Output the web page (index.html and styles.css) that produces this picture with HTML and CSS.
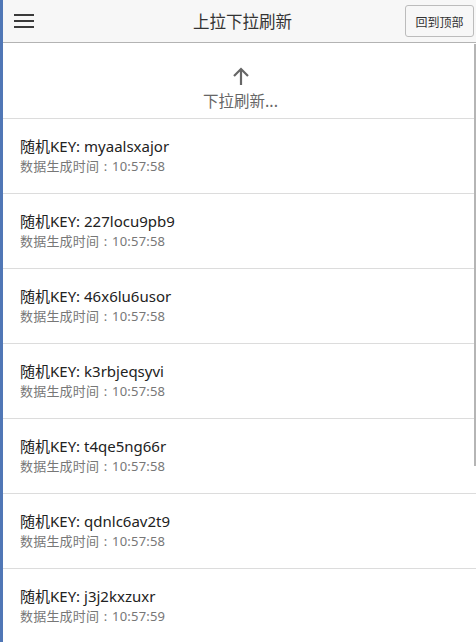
FILE: index.html
```html
<!DOCTYPE html>
<html lang="zh-CN">
<head>
<meta charset="utf-8">
<title>上拉下拉刷新</title>
<link rel="stylesheet" href="styles.css">
</head>
<body>
<div class="app">
  <header class="bar">
    <span class="menu" aria-label="menu">
      <svg width="20" height="14" viewBox="0 0 20 14"><rect x="0" y="0" width="20" height="2" fill="#3a3a3a"/><rect x="0" y="6" width="20" height="2" fill="#3a3a3a"/><rect x="0" y="12" width="20" height="2" fill="#3a3a3a"/></svg>
    </span>
    <h1 class="title">上拉下拉刷新</h1>
    <button class="top-btn">回到顶部</button>
  </header>
  <main class="content">
    <div class="pull">
      <svg class="arrow" width="20" height="20" viewBox="0 0 20 20"><path d="M10 19V3M3 10l7-7 7 7" fill="none" stroke="#666" stroke-width="2.2"/></svg>
      <div class="pull-text">下拉刷新...</div>
    </div>
    <ul class="list">
      <li class="item"><div class="key">随机KEY: myaalsxajor</div><div class="time">数据生成时间 : 10:57:58</div></li>
      <li class="item"><div class="key">随机KEY: 227locu9pb9</div><div class="time">数据生成时间 : 10:57:58</div></li>
      <li class="item"><div class="key">随机KEY: 46x6lu6usor</div><div class="time">数据生成时间 : 10:57:58</div></li>
      <li class="item"><div class="key">随机KEY: k3rbjeqsyvi</div><div class="time">数据生成时间 : 10:57:58</div></li>
      <li class="item"><div class="key">随机KEY: t4qe5ng66r</div><div class="time">数据生成时间 : 10:57:58</div></li>
      <li class="item"><div class="key">随机KEY: qdnlc6av2t9</div><div class="time">数据生成时间 : 10:57:58</div></li>
      <li class="item"><div class="key">随机KEY: j3j2kxzuxr</div><div class="time">数据生成时间 : 10:57:59</div></li>
    </ul>
  </main>
  <div class="scroll-thumb"></div>
</div>
</body>
</html>
```
FILE: styles.css
```css
html, body {
  margin: 0;
  padding: 0;
  height: 100%;
  overflow: hidden;
  background: #fff;
}
body {
  font-family: "Segoe UI", "Noto Sans", "Noto Sans CJK SC", sans-serif;
  border-left: 3px solid #5077b6;
  box-sizing: border-box;
}
.app {
  display: flex;
  flex-direction: column;
}
.bar {
  height: 42px;
  background: #f7f7f7;
  border-bottom: 1px solid #b3b3b3;
  display: flex;
  align-items: center;
  padding: 0 2px 0 11px;
}
.menu {
  width: 20px;
  height: 14px;
  display: flex;
}
.title {
  flex: 1;
  margin: 0;
  text-align: center;
  font-size: 16.5px;
  font-weight: normal;
  color: #333;
  font-family: "Noto Sans CJK SC", sans-serif;
  padding-left: 46px;
}
.top-btn {
  width: 69px;
  height: 32px;
  border: 1px solid #bcbcbc;
  border-radius: 3px;
  background: #f7f7f7;
  font-size: 12px;
  color: #333;
  font-family: "Noto Sans CJK SC", sans-serif;
  padding: 0;
}
.pull {
  border-bottom: 1px solid #dcdcdc;
  display: flex;
  flex-direction: column;
  align-items: center;
  padding-top: 23px;
  box-sizing: border-box;
  height: 76px;
}
.arrow {
  display: block;
  margin-left: 2px;
}
.pull-text {
  margin-top: 4px;
  line-height: 20px;
  font-size: 15.5px;
  color: #666;
  font-family: "Noto Sans CJK SC", sans-serif;
  padding-left: 2px;
}
.list {
  list-style: none;
  margin: 0;
  padding: 0;
}
.item {
  padding: 17px 17px 18px;
  border-bottom: 1px solid #dcdcdc;
}
.key {
  font-size: 15px;
  line-height: 20px;
  color: #222;
}
.time {
  margin-top: 1px;
  font-size: 13px;
  line-height: 18px;
  color: #777;
  word-spacing: 1px;
  letter-spacing: 0.2px;
}
.scroll-thumb {
  position: fixed;
  right: 0;
  top: 44px;
  width: 2px;
  height: 422px;
  background: #b5b5b5;
}
```
